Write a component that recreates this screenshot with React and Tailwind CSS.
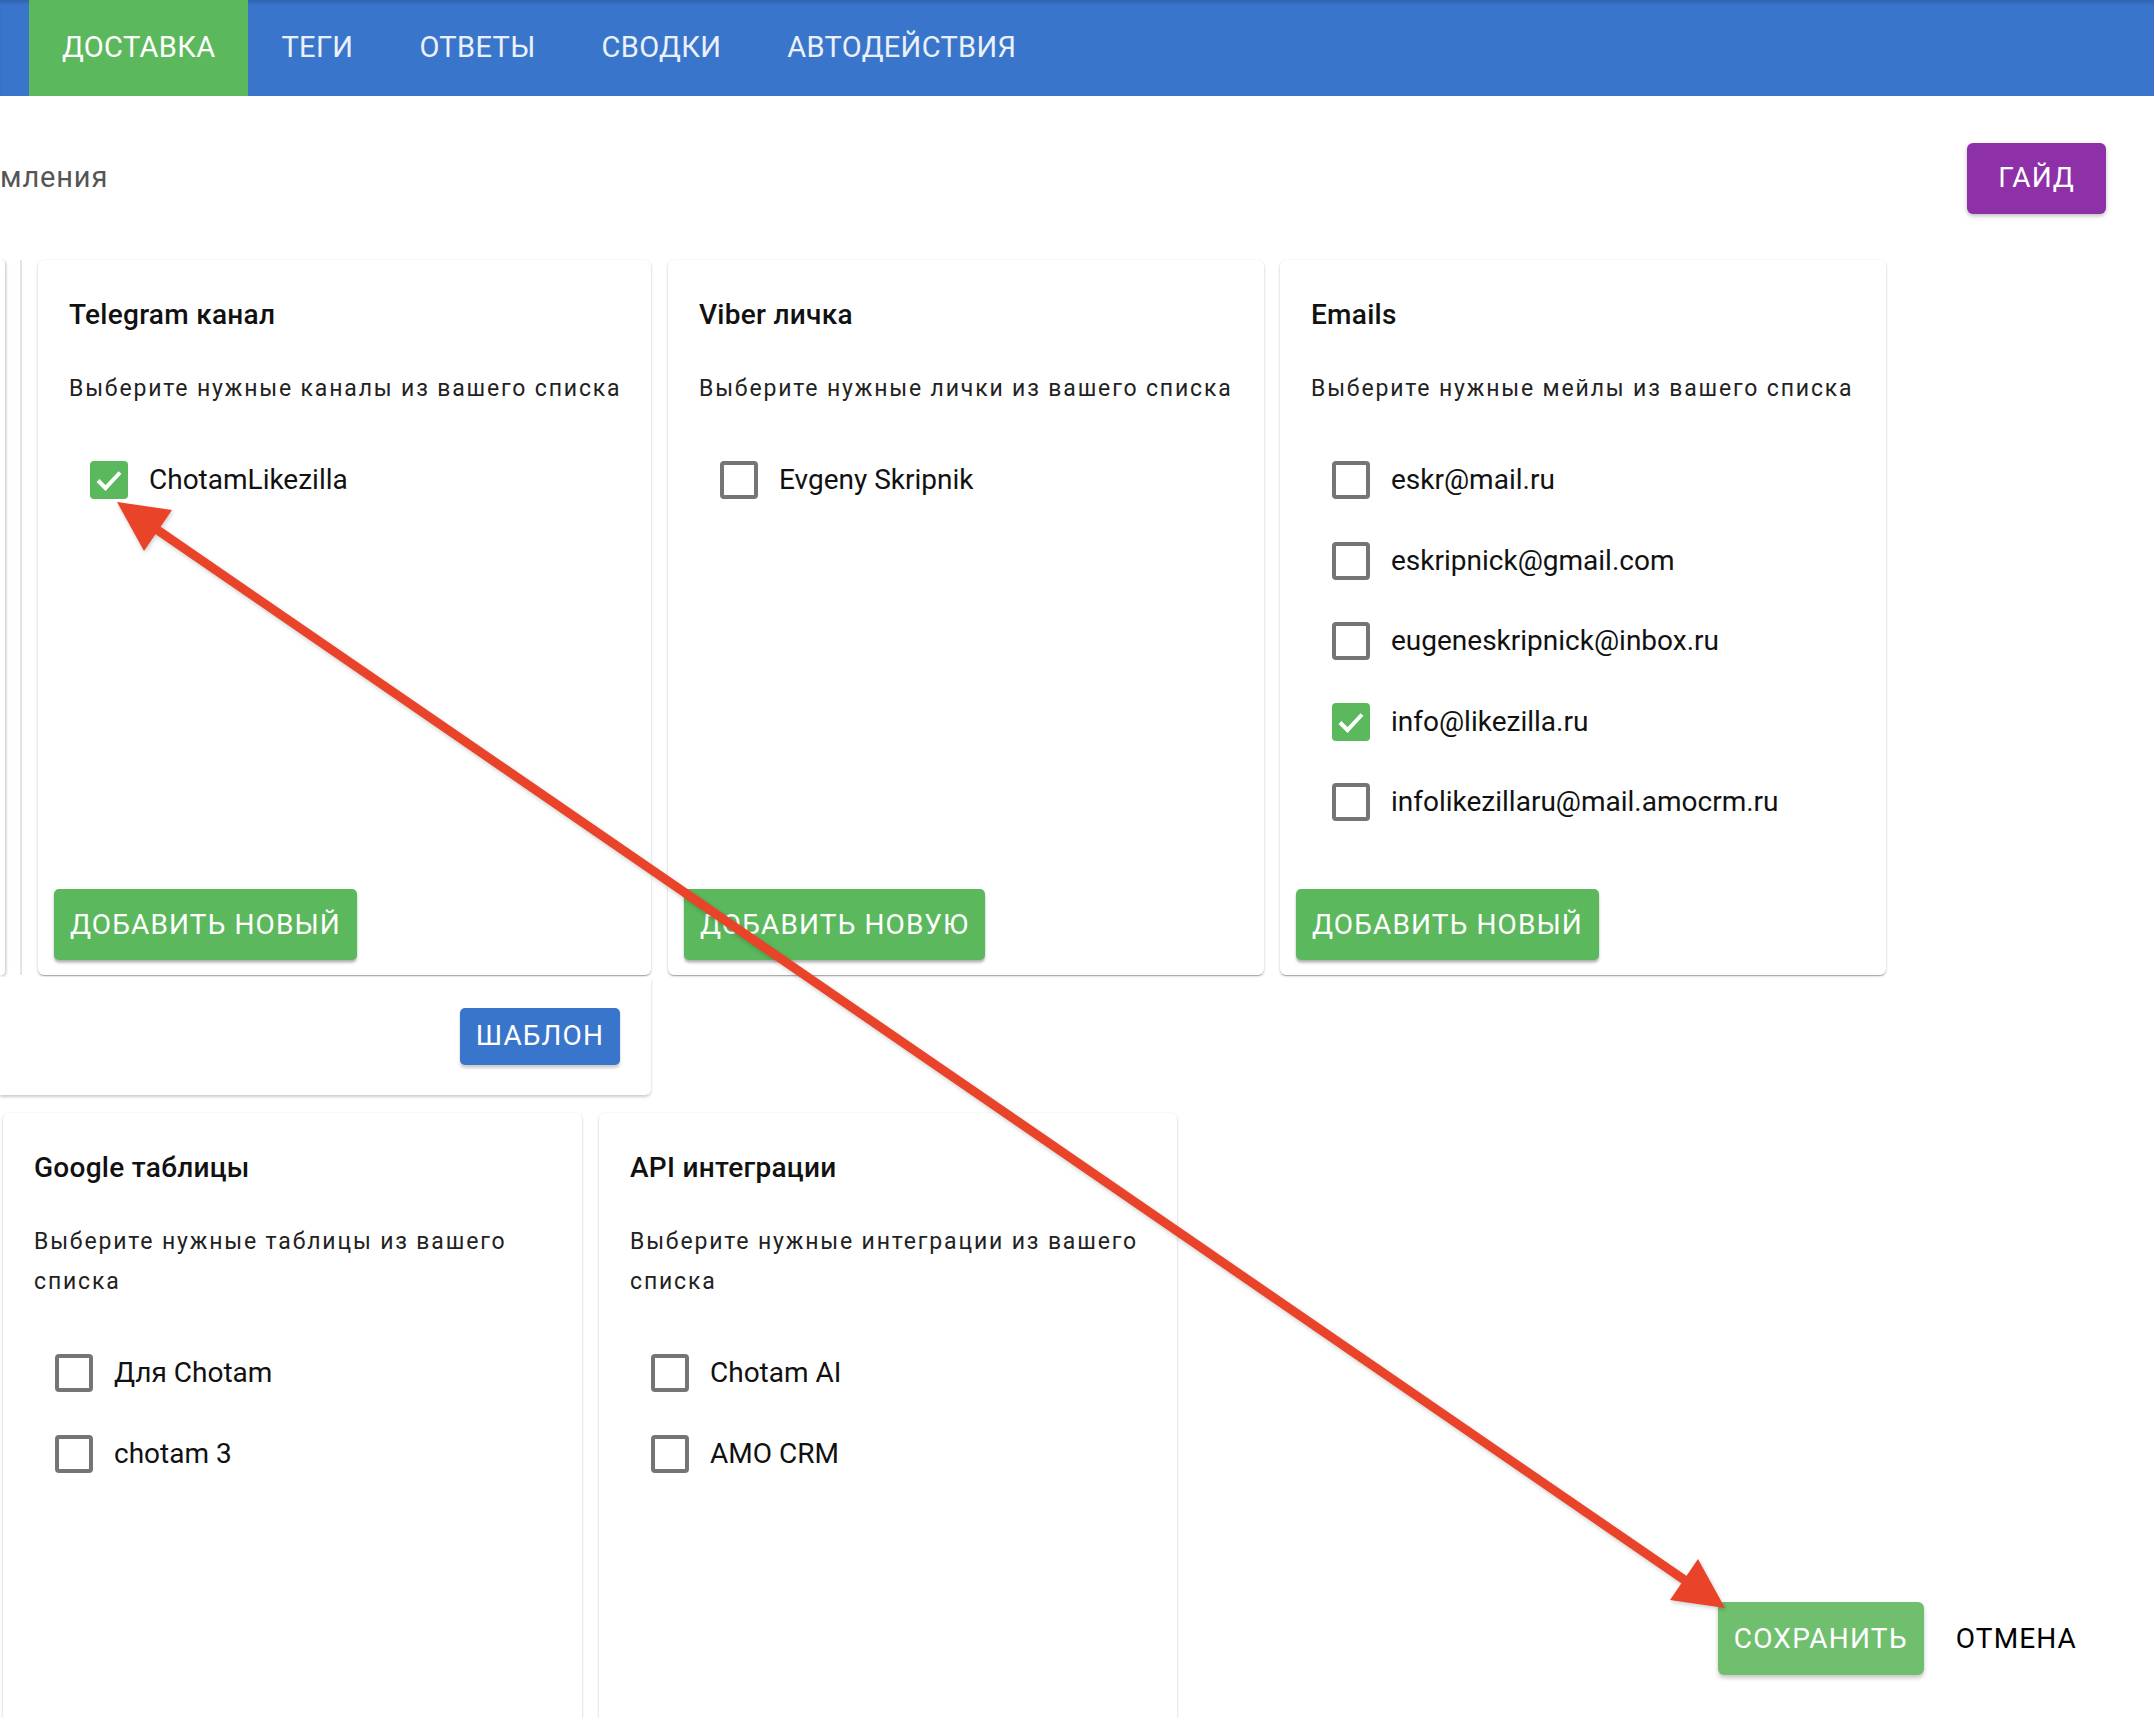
import React from 'react';

const tabs = ['Доставка', 'Теги', 'Ответы', 'Сводки', 'Автодействия'];

// checkbox drawn like the MUI one
const Check = ({ checked }) =>
  checked ? (
    <svg width="38" height="38" viewBox="0 0 38 38" className="shrink-0">
      <rect x="0" y="0" width="38" height="38" rx="4" fill="#5cb85c" />
      <path d="M8 19.5 L15.5 27 L30 11.5" fill="none" stroke="#fff" strokeWidth="4" />
    </svg>
  ) : (
    <div className="w-[38px] h-[38px] shrink-0 rounded-[4px] border-[4px] border-[#757575]" />
  );

const Card = ({ title, subtitle, items, button, className }) => (
  <div
    className={`bg-white rounded-[6px] shadow-[0_1px_3px_rgba(0,0,0,0.2),0_1px_1px_rgba(0,0,0,0.14),0_2px_1px_-1px_rgba(0,0,0,0.12)] flex flex-col ${className}`}
  >
    <div className="pl-[31px] pr-[16px] pt-[38px]">
      <h3 className="text-[28px] leading-[34px] font-medium tracking-[0.01em] text-[#111]">{title}</h3>
      <p className="mt-[37px] text-[23px] leading-[40px] tracking-[0.08em] text-[#222]">{subtitle}</p>
    </div>
    <div className="mt-[31px] pl-[52px]">
      {items.map((it) => (
        <div key={it.label} className="h-[80.5px] flex items-center">
          <Check checked={it.checked} />
          <span className="ml-[21px] text-[28px] text-[#111]">{it.label}</span>
        </div>
      ))}
    </div>
    {button && (
      <button className="mt-auto mb-[15px] ml-[16px] self-start h-[71px] px-[16px] rounded-[5px] bg-[#5cb85c] text-white text-[28px] uppercase tracking-[0.04em] shadow-[0_3px_3px_rgba(0,0,0,0.2),0_2px_2px_rgba(0,0,0,0.12)]">
        {button}
      </button>
    )}
  </div>
);

export default function App() {
  return (
    <div className="relative w-[2154px] h-[1718px] overflow-hidden bg-white font-['Roboto',sans-serif]">
      {/* Top tabs */}
      <nav className="h-[96px] bg-[#3a75cc] flex pl-[29px] shadow-[inset_0_4px_4px_-2px_rgba(0,0,0,0.18)]">
        {tabs.map((t, i) => (
          <div
            key={t}
            className={`h-full flex items-center px-[33px] text-[29px] uppercase tracking-[0.012em] ${
              i === 0 ? 'bg-[#5cb85c] text-white' : 'text-white/90'
            }`}
          >
            {t}
          </div>
        ))}
      </nav>

      {/* Header row */}
      <div className="h-[164px] flex items-center justify-between">
        <span className="text-[29px] tracking-[0.03em] text-[#555]">мления</span>
        <button className="mr-[48px] h-[71px] px-[31px] rounded-[6px] bg-[#8e30a8] text-white text-[28px] uppercase tracking-[0.04em] shadow-[0_2px_4px_rgba(0,0,0,0.25)]">
          Гайд
        </button>
      </div>

      {/* First row of cards */}
      <div className="flex items-start">
        <div className="w-[651px] flex flex-col">
          <div className="flex h-[715px]">
            <div className="w-[5px] h-full bg-white rounded-r-[4px] shadow-[1px_1px_3px_rgba(0,0,0,0.25)]" />
            <div className="ml-[15px] w-[2px] h-full bg-[#e4e4e4]" />
            <Card
              className="ml-[16px] w-[613px] h-full"
              title="Telegram канал"
              subtitle="Выберите нужные каналы из вашего списка"
              items={[{ label: 'ChotamLikezilla', checked: true }]}
              button="Добавить новый"
            />
          </div>
          <div className="mt-[2px] h-[118px] bg-white rounded-br-[6px] shadow-[0_2px_3px_rgba(0,0,0,0.2)] flex items-center justify-end pr-[31px]">
            <button className="h-[57px] px-[16px] rounded-[5px] bg-[#3a75cc] text-white text-[28px] uppercase tracking-[0.04em] shadow-[0_3px_3px_rgba(0,0,0,0.2)]">
              Шаблон
            </button>
          </div>
        </div>
        <Card
          className="ml-[17px] w-[596px] h-[715px]"
          title="Viber личка"
          subtitle="Выберите нужные лички из вашего списка"
          items={[{ label: 'Evgeny Skripnik' }]}
          button="Добавить новую"
        />
        <Card
          className="ml-[16px] w-[606px] h-[715px]"
          title="Emails"
          subtitle="Выберите нужные мейлы из вашего списка"
          items={[
            { label: 'eskr@mail.ru' },
            { label: 'eskripnick@gmail.com' },
            { label: 'eugeneskripnick@inbox.ru' },
            { label: 'info@likezilla.ru', checked: true },
            { label: 'infolikezillaru@mail.amocrm.ru' },
          ]}
          button="Добавить новый"
        />
      </div>

      {/* Second row */}
      <div className="mt-[18px] flex items-start">
        <Card
          className="ml-[3px] w-[579px] h-[640px]"
          title="Google таблицы"
          subtitle="Выберите нужные таблицы из вашего списка"
          items={[{ label: 'Для Chotam' }, { label: 'chotam 3' }]}
        />
        <Card
          className="ml-[17px] w-[578px] h-[640px]"
          title="API интеграции"
          subtitle="Выберите нужные интеграции из вашего списка"
          items={[{ label: 'Chotam AI' }, { label: 'AMO CRM' }]}
        />
        <div className="flex-1 flex justify-end items-center gap-[16px] pt-[489px] pr-[61px]">
          <button className="h-[73px] px-[16px] rounded-[6px] bg-[#70bf6e] text-white text-[28px] uppercase tracking-[0.045em] shadow-[0_3px_4px_rgba(0,0,0,0.22)]">
            Сохранить
          </button>
          <button className="h-[73px] px-[16px] text-[28px] uppercase tracking-[0.04em] text-black">
            Отмена
          </button>
        </div>
      </div>

      {/* Annotation arrow */}
      <svg className="absolute inset-0 pointer-events-none" width="2154" height="1718">
        <g fill="#e9432a" stroke="none" style={{ filter: 'drop-shadow(1px 2px 2px rgba(0,0,0,0.2))' }}>
          <line x1="156" y1="529" x2="1686" y2="1581" stroke="#e9432a" strokeWidth="9" />
          <polygon points="117,502 172,510 144,551" />
          <polygon points="1725,1608 1698,1559 1670,1600" />
        </g>
      </svg>
    </div>
  );
}
